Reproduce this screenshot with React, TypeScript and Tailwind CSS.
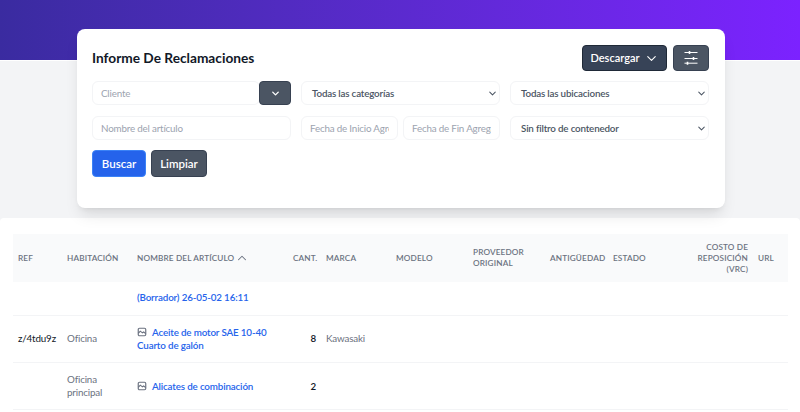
import React from "react";
import { ChevronDown, ChevronUp } from "lucide-react";

function Pic() {
  return (
    <svg width="10" height="10" viewBox="0 0 24 24" fill="none" stroke="#6b7280" strokeWidth="2.8" className="inline-block align-[-1px] mr-[5px]">
      <rect x="3" y="3" width="18" height="18" rx="3" />
      <path d="M3 15l5-5 5 4 3-2 5 4" />
    </svg>
  );
}

function Sliders() {
  return (
    <svg width="14" height="16" viewBox="0 0 14 16" fill="none" stroke="currentColor" strokeWidth="1">
      <path d="M0.5 2.5h13M0.5 8.5h13M0.5 13.2h13" />
      <path d="M5.5 1v3M9.5 7v3M3.5 11.7v3" strokeWidth="1.6" />
    </svg>
  );
}

function Field({ children, className = "" }: { children: React.ReactNode; className?: string }) {
  return (
    <div className={"h-6 border border-gray-100 rounded-md bg-white flex items-center text-[9.8px] tracking-[-0.18px] overflow-hidden whitespace-nowrap " + className}>
      {children}
    </div>
  );
}

function Select({ label }: { label: string }) {
  return (
    <Field className="pl-[10px] pr-px justify-between font-semibold text-[#4b5563]">
      <span className="pt-px">{label}</span>
      <ChevronDown size={11} strokeWidth={2.2} className="text-[#4b5563]" />
    </Field>
  );
}

const th = "px-[5px] font-semibold text-[8.2px] tracking-[0.15px] text-[#6b7280] uppercase text-left align-middle leading-[11px]";
const td = "px-[5px] align-middle text-[9.8px] tracking-[-0.15px] leading-[13px] text-[#6b7280]";
const link = "text-[#2563eb] font-semibold";

export default function App() {
  return (
    <div className="h-[412px] w-[800px] overflow-hidden bg-gray-100 relative" style={{ fontFamily: "Lato, 'Noto Sans', sans-serif" }}>
      <div className="h-[218px]">
        <div className="h-[61px] border-b border-white bg-gradient-to-r from-[#3a2ba0] to-[#7c22ff]" />
        <div className="ml-[77px] w-[648px] -mt-[32px] relative bg-white rounded-lg shadow-lg h-[179px] pl-[15px] pr-4 pt-4">
          <div className="flex justify-between items-center h-[26px]">
            <h1 className="text-[13.7px] font-bold text-[#111827]">Informe De Reclamaciones</h1>
            <div className="flex gap-[6px]">
              <button className="h-[26px] w-[85px] rounded bg-[#374357] border border-[#1f2937] text-white text-[11px] font-semibold flex items-center justify-center gap-[4px]">
                Descargar <ChevronDown size={15} strokeWidth={1.8} />
              </button>
              <button className="h-[26px] w-[36px] rounded bg-[#4b5563] border border-[#374151] text-white flex items-center justify-center">
                <Sliders />
              </button>
            </div>
          </div>
          <div className="grid grid-cols-[199px_199px_199px] gap-x-[10px] gap-y-[11px] mt-[10px]">
            <div className="flex">
              <Field className="flex-1 pl-2 text-[#9ca3af] -mr-px"><span className="pt-px">Cliente</span></Field>
              <button className="h-6 w-8 bg-[#4b5563] border border-[#374151] rounded text-white flex items-center justify-center relative">
                <ChevronDown size={11} strokeWidth={3} />
              </button>
            </div>
            <Select label="Todas las categorías" />
            <Select label="Todas las ubicaciones" />
            <Field className="pl-2 text-[#9ca3af]"><span className="pt-px">Nombre del artículo</span></Field>
            <div className="flex gap-[5px]">
              <Field className="flex-1 min-w-0 px-2 text-[#9ca3af]"><span className="overflow-hidden pt-px">Fecha de Inicio Agregado</span></Field>
              <Field className="flex-1 min-w-0 px-2 text-[#9ca3af]"><span className="overflow-hidden pt-px">Fecha de Fin Agregado</span></Field>
            </div>
            <Select label="Sin filtro de contenedor" />
          </div>
          <div className="flex gap-[5px] mt-[10px]">
            <button className="h-[27px] w-[54px] rounded bg-[#2563eb] border border-[#3b82f6] text-white text-[11.5px] font-semibold">Buscar</button>
            <button className="h-[27px] w-[56px] rounded bg-[#4b5563] border border-[#374151] text-white text-[11.5px] font-semibold">Limpiar</button>
          </div>
        </div>
      </div>
      <div className="pt-4 pl-[13px] pr-3 bg-white rounded-t-sm h-[194px]">
        <table className="table-fixed border-collapse w-[775px]">
          <colgroup>
            <col className="w-[49px]" />
            <col className="w-[70px]" />
            <col className="w-[156px]" />
            <col className="w-[33px]" />
            <col className="w-[70px]" />
            <col className="w-[77px]" />
            <col className="w-[77px]" />
            <col className="w-[63px]" />
            <col className="w-[72px]" />
            <col className="w-[73px]" />
            <col className="w-[35px]" />
          </colgroup>
          <thead>
            <tr className="h-[48px] bg-[#f9fafb]">
              <th className={th}>Ref</th>
              <th className={th}>Habitación</th>
              <th className={th}>
                <span className="inline-flex items-center gap-px whitespace-nowrap">Nombre del artículo <ChevronUp size={14} strokeWidth={1.8} /></span>
              </th>
              <th className={th + " text-right whitespace-nowrap"}>Cant.</th>
              <th className={th}>Marca</th>
              <th className={th}>Modelo</th>
              <th className={th}>Proveedor Original</th>
              <th className={th}>Antigüedad</th>
              <th className={th}>Estado</th>
              <th className={th + " text-right"}>Costo de Reposición (VRC)</th>
              <th className={th}>URL</th>
            </tr>
          </thead>
          <tbody>
            <tr className="h-[33px] border-b border-gray-100">
              <td className={td}></td>
              <td className={td}></td>
              <td className={td + " pb-[2px]"} colSpan={3}><span className={link}>(Borrador) 26-05-02 16:11</span></td>
              <td className={td} colSpan={6}></td>
            </tr>
            <tr className="h-[47px] border-b border-gray-100">
              <td className={td + " text-[#111827]"}>z/4tdu9z</td>
              <td className={td}>Oficina</td>
              <td className={td}><Pic /><span className={link}>Aceite de motor SAE 10-40 Cuarto de galón</span></td>
              <td className={td + " text-right text-[#111827] font-semibold"}>8</td>
              <td className={td}>Kawasaki</td>
              <td className={td} colSpan={6}></td>
            </tr>
            <tr className="h-[47px] border-b border-gray-100">
              <td className={td}></td>
              <td className={td}>Oficina principal</td>
              <td className={td + " pt-[2px]"}><Pic /><span className={link}>Alicates de combinación</span></td>
              <td className={td + " pt-[2px] text-right text-[#111827] font-semibold"}>2</td>
              <td className={td} colSpan={7}></td>
            </tr>
          </tbody>
        </table>
      </div>
    </div>
  );
}
